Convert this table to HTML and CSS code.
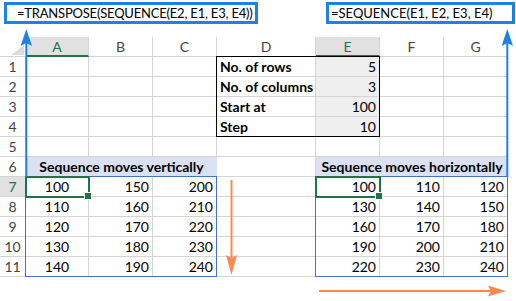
FILE: index.html
```html
<!DOCTYPE html>
<html>
<head>
<meta charset="utf-8">
<link rel="stylesheet" href="styles.css">
</head>
<body>
<div class="page">
  <div class="formulas">
    <div class="fbox f1">=TRANSPOSE(SEQUENCE(E2, E1, E3, E4))</div>
    <div class="fbox f2">=SEQUENCE(E1, E2, E3, E4)</div>
  </div>
  <div class="sheet">
    <div class="grid">
      <div class="c corner"><svg width="26" height="20" viewBox="0 0 26 20"><polygon points="24,8 24,18 11,18" fill="#dcdcdc"/></svg></div>
      <div class="c hd sel-h">A</div>
      <div class="c hd">B</div>
      <div class="c hd">C</div>
      <div class="c hd">D</div>
      <div class="c hd sel-h">E</div>
      <div class="c hd">F</div>
      <div class="c hd">G</div>

      <div class="c rn">1</div><div class="c"></div><div class="c"></div><div class="c"></div>
      <div class="c b">No. of rows</div><div class="c r fill">5</div><div class="c"></div><div class="c"></div>

      <div class="c rn">2</div><div class="c"></div><div class="c"></div><div class="c"></div>
      <div class="c b">No. of columns</div><div class="c r fill">3</div><div class="c"></div><div class="c"></div>

      <div class="c rn">3</div><div class="c"></div><div class="c"></div><div class="c"></div>
      <div class="c b">Start at</div><div class="c r fill">100</div><div class="c"></div><div class="c"></div>

      <div class="c rn">4</div><div class="c"></div><div class="c"></div><div class="c"></div>
      <div class="c b">Step</div><div class="c r fill">10</div><div class="c"></div><div class="c"></div>

      <div class="c rn">5</div><div class="c"></div><div class="c"></div><div class="c"></div>
      <div class="c"></div><div class="c"></div><div class="c"></div><div class="c"></div>

      <div class="c rn">6</div><div class="c band">Sequence moves vertically</div>
      <div class="c"></div><div class="c band">Sequence moves horizontally</div>

      <div class="c rn sel-r">7</div><div class="c m">100</div><div class="c r">150</div><div class="c r">200</div>
      <div class="c"></div><div class="c r">100</div><div class="c r">110</div><div class="c r">120</div>

      <div class="c rn">8</div><div class="c m">110</div><div class="c r">160</div><div class="c r">210</div>
      <div class="c"></div><div class="c r">130</div><div class="c r">140</div><div class="c r">150</div>

      <div class="c rn">9</div><div class="c m">120</div><div class="c r">170</div><div class="c r">220</div>
      <div class="c"></div><div class="c r">160</div><div class="c r">170</div><div class="c r">180</div>

      <div class="c rn">10</div><div class="c m">130</div><div class="c r">180</div><div class="c r">230</div>
      <div class="c"></div><div class="c r">190</div><div class="c r">200</div><div class="c r">210</div>

      <div class="c rn">11</div><div class="c m">140</div><div class="c r">190</div><div class="c r">240</div>
      <div class="c"></div><div class="c r">220</div><div class="c r">230</div><div class="c r">240</div>
    </div>
    <div class="frames">
      <div class="frame frame-d"></div>
      <div class="frame frame-a"></div>
      <div class="frame frame-e"></div>
      <div class="sel sel-a"></div>
      <div class="sel sel-e"></div>
    </div>
  </div>
  <svg class="arrows" width="516" height="301" viewBox="0 0 516 301">
    <g fill="#1f80e6" stroke="none">
      <rect x="25.3" y="40" width="2" height="137"/>
      <polygon points="26.3,29 32,46 26.3,43 20.6,46"/>
      <rect x="506.3" y="40" width="2" height="137"/>
      <polygon points="507.3,29 513,46 507.3,43 501.6,46"/>
    </g>
    <g fill="#f68b52" stroke="none">
      <rect x="230.5" y="180" width="2" height="80"/>
      <polygon points="231.5,275 226,255 231.5,258 237,255"/>
      <rect x="319" y="290" width="172" height="2"/>
      <polygon points="506,291 488,285.5 491,291 488,296.5"/>
    </g>
  </svg>
</div>
</body>
</html>
```

FILE: styles.css
```css
* {
  box-sizing: border-box;
  margin: 0;
  padding: 0;
}

body {
  margin: 0;
  background: #fff;
  font-family: Lato, "Liberation Sans", sans-serif;
  color: #000;
}

.page {
  position: relative;
  width: 516px;
  height: 301px;
  overflow: hidden;
  background: #fff;
}

.formulas {
  display: flex;
  align-items: flex-start;
  height: 37px;
  padding: 2px 1px 0 4px;
}

.fbox {
  height: 22px;
  border: 3px solid #1f80e6;
  font-size: 13px;
  line-height: 16px;
  white-space: nowrap;
}

.f1 {
  width: 254px;
  padding-left: 10px;
  letter-spacing: -0.2px;
}

.f2 {
  width: 189px;
  margin-left: auto;
  padding-left: 2px;
}

.sheet {
  position: relative;
}

.grid,
.frames {
  display: grid;
  grid-template-columns: 26px 63px 64px 64px 99px 64px 64px 64px;
  grid-template-rows: repeat(12, 20px);
}

.frames {
  position: absolute;
  inset: 0;
  pointer-events: none;
}

.c {
  border-right: 1px solid #d4d4d4;
  border-bottom: 1px solid #d4d4d4;
  font-size: 14px;
  line-height: 19px;
  padding: 0 3px;
  white-space: nowrap;
}

.corner {
  padding: 0;
  border-right: none;
}

.corner svg {
  display: block;
}

.hd {
  color: #444;
  text-align: center;
}

.sel-h {
  background: #e1e1e1;
  color: #217346;
  border-bottom: 2px solid #217346;
}

.rn {
  color: #444;
  text-align: center;
  padding: 0;
}

.sel-r {
  background: #e1e1e1;
  color: #217346;
}

.r {
  text-align: right;
}

.m {
  text-align: center;
}

.b {
  font-weight: 700;
}

.fill {
  background: #efefef;
}

.band {
  grid-column: span 3;
  background: #d9e1f2;
  text-align: center;
  font-weight: 700;
  border-right: none;
}

.frame {
  margin: -1px 0 0 -1px;
  border: 1px solid #4472c4;
}

.frame-d {
  grid-column: 5 / 7;
  grid-row: 2 / 6;
  border-color: #000;
}

.frame-a {
  grid-column: 2 / 5;
  grid-row: 8 / 13;
}

.frame-e {
  grid-column: 6 / 9;
  grid-row: 8 / 13;
}

.sel {
  position: relative;
  margin: -1px;
  border: 2px solid #217346;
}

.sel::after {
  content: "";
  position: absolute;
  right: -4px;
  bottom: -4px;
  width: 6px;
  height: 6px;
  background: #217346;
  border: 1px solid #fff;
}

.sel-a {
  grid-column: 2 / 3;
  grid-row: 8 / 9;
}

.sel-e {
  grid-column: 6 / 7;
  grid-row: 8 / 9;
}

.arrows {
  position: absolute;
  top: 0;
  left: 0;
}
```
